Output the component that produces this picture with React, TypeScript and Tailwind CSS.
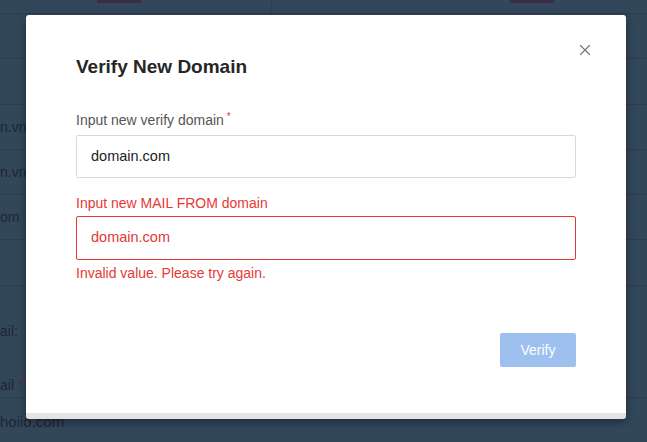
import { X } from "lucide-react";

const rows = [
  { h: "h-[45px]", text: "" },
  { h: "h-[46px]", text: "" },
  { h: "h-[45px]", text: "n.vn" },
  { h: "h-[45px]", text: "n.vn" },
  { h: "h-[45px]", text: "om" },
  { h: "h-[46px]", text: "" },
];

export default function App() {
  return (
    <div className="relative h-[442px] w-[647px] overflow-hidden bg-[#33475b] font-['Liberation_Sans',Arial,sans-serif]">
      {/* dimmed page behind the dialog */}
      <div className="flex h-[14px] border-b border-[#2b3d4f]">
        <div className="ml-[97px] h-[3px] w-[44px] bg-[#3a2d45]" />
        <div className="ml-[130px] h-full border-l border-[#2e4154]" />
        <div className="ml-[238px] h-[3px] w-[44px] bg-[#3a2d45]" />
      </div>
      {rows.map((r, i) => (
        <div
          key={i}
          className={`${r.h} flex items-center border-b border-[#2b3d4f] text-[14px] text-[#1c2632]`}
        >
          <span>{r.text}</span>
        </div>
      ))}
      <div className="flex h-[112px] flex-col border-b border-[#2b3d4f] text-[14px] text-[#1c2632]">
        <span className="mt-[35px]">ail:</span>
        <span className="mt-[33px]">
          ail <span className="text-[#5a2e3c]">*</span>
        </span>
      </div>
      <div className="pt-[13px] text-[15px] text-[#1c2632]">hoiio.com</div>

      {/* dialog */}
      <div className="absolute left-[26px] top-[15px] w-[600px] overflow-hidden rounded-[3px] border-b-[6px] border-[#e3e3e3] bg-white shadow-[0_3px_10px_rgba(0,0,0,0.4)]">
        <button className="absolute right-[32px] top-[26px] text-[#7b7b7b]">
          <X size={18} strokeWidth={1.6} />
        </button>
        <div className="flex flex-col px-[50px] pt-[38px] pb-[46px]">
          <h2 className="text-[19px] font-bold leading-[28px] text-[#262626]">
            Verify New Domain
          </h2>
          <label className="mt-[29px] text-[14px] leading-[20px] text-[#555]">
            Input new verify domain
            <sup className="ml-[3px] text-[10px] text-[#e53935]">*</sup>
          </label>
          <div className="mt-[5px] flex h-[43px] items-center rounded-[2px] border border-[#d9d9d9] px-[14px] text-[14.5px] text-[#222]">
            domain.com
          </div>
          <label className="mt-[15px] text-[14px] leading-[20px] text-[#e53935]">
            Input new MAIL FROM domain
          </label>
          <div className="mt-[3px] flex h-[44px] items-center rounded-[2px] border border-[#e53935] px-[14px] text-[14.5px] text-[#e53935]">
            domain.com
          </div>
          <p className="mt-[3px] text-[14px] leading-[20px] text-[#e53935]">
            Invalid value. Please try again.
          </p>
          <div className="mt-[50px] flex justify-end">
            <button className="h-[34px] w-[76px] rounded-[2px] bg-[#9dc0ef] text-[14px] text-white">
              Verify
            </button>
          </div>
        </div>
      </div>
    </div>
  );
}
